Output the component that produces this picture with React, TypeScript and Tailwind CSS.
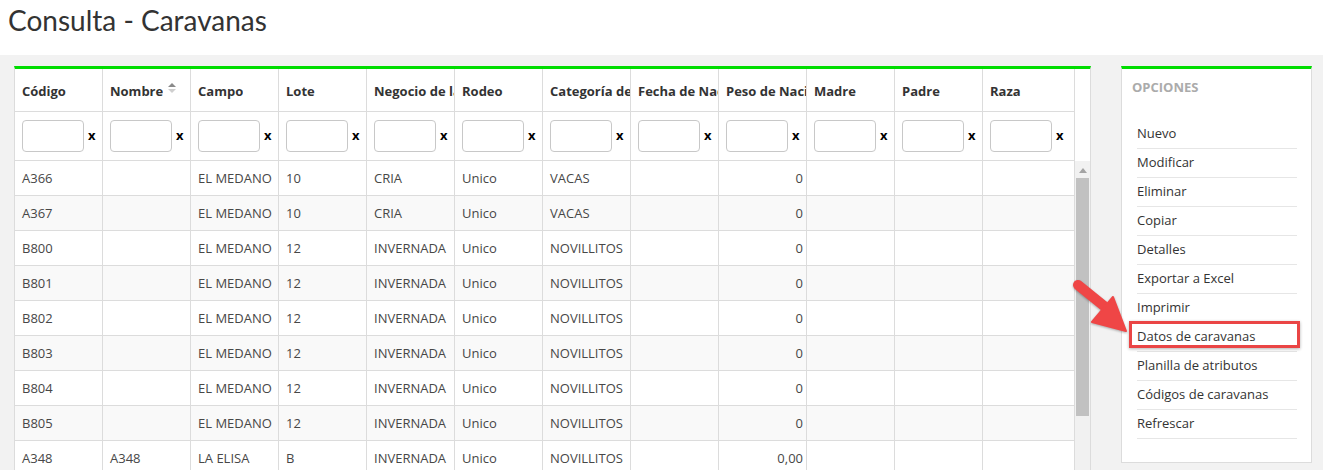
import React from "react";

const columns = [
  { label: "Código", w: "w-[88px]" },
  { label: "Nombre", w: "w-[88px]", sort: true },
  { label: "Campo", w: "w-[88px]" },
  { label: "Lote", w: "w-[88px]" },
  { label: "Negocio de la caravana", w: "w-[88px]" },
  { label: "Rodeo", w: "w-[88px]" },
  { label: "Categoría de la caravana", w: "w-[88px]" },
  { label: "Fecha de Nacimiento", w: "w-[88px]" },
  { label: "Peso de Nacimiento", w: "w-[88px]" },
  { label: "Madre", w: "w-[88px]" },
  { label: "Padre", w: "w-[88px]" },
  { label: "Raza", w: "w-[92px]" },
];

const rows = [
  ["A366", "", "EL MEDANO", "10", "CRIA", "Unico", "VACAS", "", "0", "", "", ""],
  ["A367", "", "EL MEDANO", "10", "CRIA", "Unico", "VACAS", "", "0", "", "", ""],
  ["B800", "", "EL MEDANO", "12", "INVERNADA", "Unico", "NOVILLITOS", "", "0", "", "", ""],
  ["B801", "", "EL MEDANO", "12", "INVERNADA", "Unico", "NOVILLITOS", "", "0", "", "", ""],
  ["B802", "", "EL MEDANO", "12", "INVERNADA", "Unico", "NOVILLITOS", "", "0", "", "", ""],
  ["B803", "", "EL MEDANO", "12", "INVERNADA", "Unico", "NOVILLITOS", "", "0", "", "", ""],
  ["B804", "", "EL MEDANO", "12", "INVERNADA", "Unico", "NOVILLITOS", "", "0", "", "", ""],
  ["B805", "", "EL MEDANO", "12", "INVERNADA", "Unico", "NOVILLITOS", "", "0", "", "", ""],
  ["A348", "A348", "LA ELISA", "B", "INVERNADA", "Unico", "NOVILLITOS", "", "0,00", "", "", ""],
];

const opciones = [
  "Nuevo",
  "Modificar",
  "Eliminar",
  "Copiar",
  "Detalles",
  "Exportar a Excel",
  "Imprimir",
  "Datos de caravanas",
  "Planilla de atributos",
  "Códigos de caravanas",
  "Refrescar",
];

const SortIcon = () => (
  <svg width="8" height="11" viewBox="0 0 8 11" className="ml-[5px] -mt-[6px] shrink-0">
    <path d="M4 0 L8 4 L0 4 Z" fill="#8a8a8a" />
    <path d="M4 10 L8 6 L0 6 Z" fill="#cfcfcf" />
  </svg>
);

export default function App() {
  return (
    <div
      className="relative w-[1323px] h-[470px] overflow-hidden bg-[#f2f2f2] text-[13px] text-[#333]"
      style={{ fontFamily: '"Open Sans", "Liberation Sans", sans-serif' }}
    >
      <div className="h-[55px] bg-white pl-[8px] pt-[2px]">
        <h1
          className="text-[28px] leading-[36px] text-[#333]"
          style={{ fontFamily: 'Lato, "Open Sans", sans-serif' }}
        >
          Consulta - Caravanas
        </h1>
      </div>

      <div className="flex items-start gap-[30px] pl-[14px] pt-[11px]">
        {/* grid */}
        <div className="w-[1077px] shrink-0 bg-white border-t-[3px] border-t-[#00dd00] border-x border-x-[#dcdcdc]">
          <div className="flex">
            {columns.map((c) => (
              <div
                key={c.label}
                className={`${c.w} h-[43px] shrink-0 border-r border-b border-[#dcdcdc] flex items-center pl-[7px] pt-[3px] font-bold whitespace-nowrap overflow-hidden`}
              >
                <span className="min-w-0 overflow-hidden">{c.label}</span>
                {c.sort && <SortIcon />}
              </div>
            ))}
          </div>
          <div className="flex">
            {columns.map((c) => (
              <div
                key={c.label}
                className={`${c.w} h-[49px] shrink-0 border-r border-b border-[#dcdcdc] flex items-center pl-[7px]`}
              >
                <input className="w-[62px] h-[32px] rounded-[4px] border border-[#c8c8c8] bg-white outline-none" />
                <span className="ml-[4px] font-bold text-black">x</span>
              </div>
            ))}
          </div>
          <div className="flex">
            <div className="w-[1060px] shrink-0">
              {rows.map((r, i) => (
                <div key={i} className={`flex ${i % 2 === 1 ? "bg-[#f9f9f9]" : "bg-white"}`}>
                  {r.map((v, j) => (
                    <div
                      key={j}
                      className={`${columns[j].w} h-[35px] shrink-0 border-r border-b border-[#dcdcdc] flex items-center pt-[1px] whitespace-nowrap overflow-hidden text-[#474747] ${
                        j === 8 ? "justify-end pr-[3px]" : "pl-[7px]"
                      }`}
                    >
                      {v}
                    </div>
                  ))}
                </div>
              ))}
            </div>
            <div className="w-[15px] bg-[#f1f1f1] flex flex-col items-center">
              <svg width="8" height="5" viewBox="0 0 8 5" className="mt-[7px]">
                <path d="M4 0 L8 5 L0 5 Z" fill="#a3a3a3" />
              </svg>
              <div className="mt-[5px] w-[13px] h-[238px] bg-[#c1c1c1]" />
            </div>
          </div>
        </div>

        {/* options */}
        <div className="relative w-[191px] shrink-0 bg-white border-t-[3px] border-t-[#00dd00] border-x border-b border-x-[#dcdcdc] border-b-[#dcdcdc] pb-[23px]">
          <div className="pl-[10px] pt-[8px] leading-[20px] font-bold text-[#ababab]">OPCIONES</div>
          <ul className="mt-[23px] ml-[15px] mr-[14px]">
            {opciones.map((o) => (
              <li key={o} className="h-[29px] border-b border-[#e6e6e6] flex items-center text-[#333]">
                {o}
              </li>
            ))}
          </ul>
          <div className="absolute left-[7px] top-[252px] w-[171px] h-[27px] border-[3px] border-[#ea4545] shadow-[0_1px_3px_rgba(0,0,0,0.3)]" />
        </div>
      </div>

      <svg
        className="absolute left-[1060px] top-[270px]"
        width="80"
        height="75"
        viewBox="1060 270 80 75"
      >
        <g style={{ filter: "drop-shadow(0 1px 1px rgba(0,0,0,0.3))" }}>
          <line x1="1078" y1="285" x2="1104" y2="306" stroke="#ef4646" strokeWidth="10" strokeLinecap="round" />
          <path d="M1092 322 L1126 331 L1113 297 Z" fill="#ef4646" stroke="#ef4646" strokeWidth="2" strokeLinejoin="round" />
        </g>
      </svg>
    </div>
  );
}
